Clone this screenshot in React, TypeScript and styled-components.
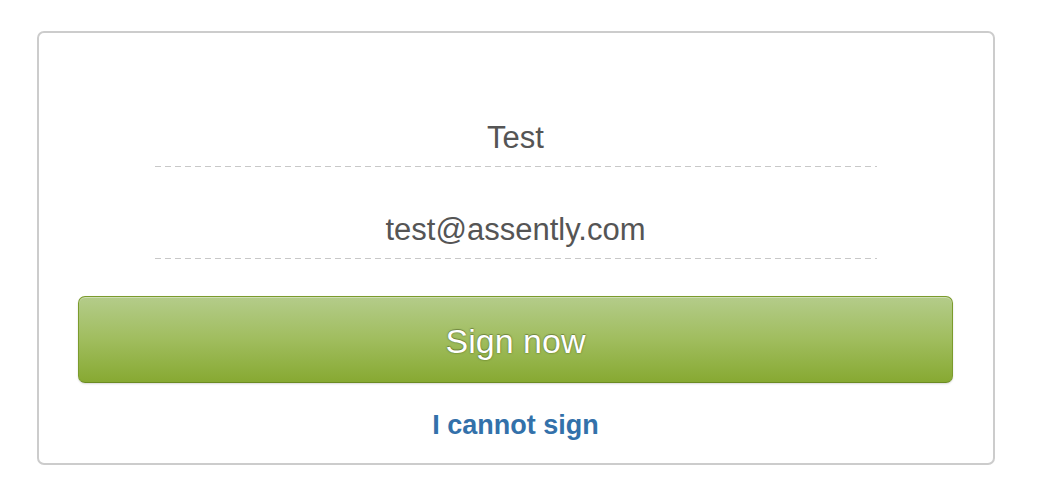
import React from 'react';
import styled, { createGlobalStyle } from 'styled-components';

const GlobalStyle = createGlobalStyle`
  html, body {
    margin: 0;
    padding: 0;
    background: #ffffff;
    font-family: "Liberation Sans", Arial, Helvetica, sans-serif;
  }
  * { box-sizing: border-box; }
`;

const Page = styled.div`
  padding: 31px 0 0 37px;
`;

const Card = styled.div`
  width: 958px;
  border: 2px solid #cccccc;
  border-radius: 7px;
  background: #fff;
  padding: 85px 40px 22px 39px;
  display: flex;
  flex-direction: column;
  align-items: center;
`;

const Field = styled.div<{ $gap?: number }>`
  width: 722px;
  margin-bottom: ${p => p.$gap ?? 0}px;
  padding-bottom: 9px;
  font-size: 31px;
  line-height: 40px;
  color: #555555;
  text-align: center;
  background-image: repeating-linear-gradient(
    to right,
    #c8c8c8 0,
    #c8c8c8 6px,
    transparent 6px,
    transparent 10px
  );
  background-size: 100% 1px;
  background-position: bottom left;
  background-repeat: no-repeat;
`;

const SignButton = styled.button`
  width: 100%;
  height: 87px;
  margin-top: 37px;
  border: 1px solid #7b9b2c;
  border-bottom-color: #6b8b22;
  border-radius: 7px;
  background: linear-gradient(to bottom, #b4cc8a 0%, #a0bd5e 50%, #87a932 100%);
  box-shadow: inset 0 1px 0 rgba(255, 255, 255, 0.35), 0 1px 2px rgba(0, 0, 0, 0.15);
  color: #ffffff;
  font-family: "Liberation Sans", Arial, Helvetica, sans-serif;
  font-size: 34px;
  text-shadow: 0 0 2px rgba(50, 70, 10, 0.75), 0 -1px 0 rgba(0, 0, 0, 0.2);
  display: flex;
  align-items: center;
  justify-content: center;
  cursor: pointer;
  padding: 4px 0 0;
`;

const CannotSign = styled.a`
  margin-top: 26px;
  font-size: 27px;
  line-height: 32px;
  font-weight: bold;
  color: #3371aa;
  text-decoration: none;
  cursor: pointer;
`;

export default function App() {
  return (
    <>
      <GlobalStyle />
      <Page>
        <Card>
          <Field $gap={43}>Test</Field>
          <Field>test@assently.com</Field>
          <SignButton>Sign now</SignButton>
          <CannotSign>I cannot sign</CannotSign>
        </Card>
      </Page>
    </>
  );
}
